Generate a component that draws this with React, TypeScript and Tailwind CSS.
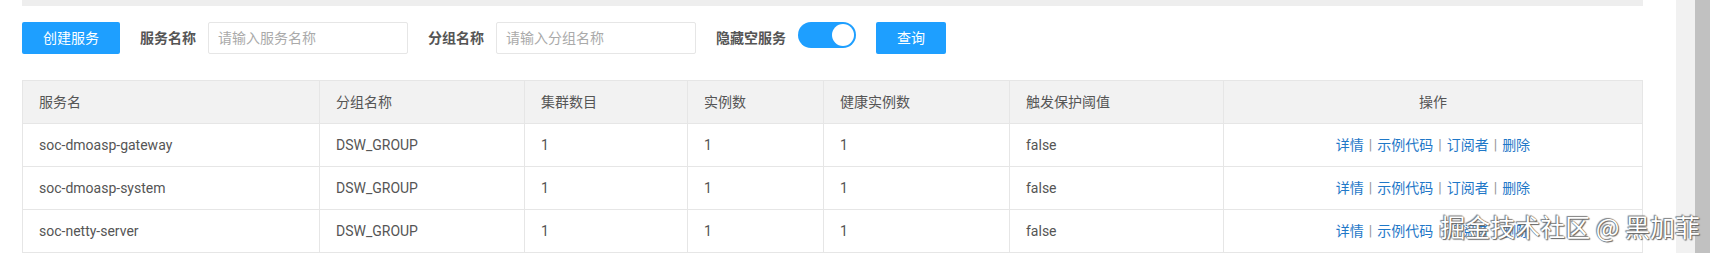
import React from "react";

const FONT = "font-['Roboto','Noto_Sans_CJK_SC',sans-serif]";

const cols = [
  { w: "w-[297px]", key: "name", title: "服务名" },
  { w: "w-[205px]", key: "group", title: "分组名称" },
  { w: "w-[163px]", key: "cluster", title: "集群数目" },
  { w: "w-[136px]", key: "inst", title: "实例数" },
  { w: "w-[186px]", key: "healthy", title: "健康实例数" },
  { w: "w-[214px]", key: "protect", title: "触发保护阈值" },
];

const rows = [
  { name: "soc-dmoasp-gateway", group: "DSW_GROUP", cluster: "1", inst: "1", healthy: "1", protect: "false" },
  { name: "soc-dmoasp-system", group: "DSW_GROUP", cluster: "1", inst: "1", healthy: "1", protect: "false" },
  { name: "soc-netty-server", group: "DSW_GROUP", cluster: "1", inst: "1", healthy: "1", protect: "false" },
];

function Sep() {
  return <span className="mx-[5px] text-[#999]">|</span>;
}

function Actions() {
  return (
    <span className="text-[#1f78c8]">
      <span>详情</span>
      <Sep />
      <span>示例代码</span>
      <Sep />
      <span>订阅者</span>
      <Sep />
      <span>删除</span>
    </span>
  );
}

export default function App() {
  return (
    <div className={`relative flex h-[253px] w-[1710px] overflow-hidden bg-white text-[14px] ${FONT}`}>
      <div className="flex w-[1676px] flex-col pl-[22px] pr-[33px]">
        <div className="h-[6px] bg-[#eeeeee]" />
        <div className="mt-[16px] flex h-[32px] items-center">
          <button className="h-[32px] w-[98px] rounded-[2px] bg-[#1E9FFF] text-[14px] text-white">创建服务</button>
          <span className="ml-[20px] w-[56px] font-bold text-[#555]">服务名称</span>
          <input
            className="ml-[12px] h-[32px] w-[200px] rounded-[2px] border border-[#e6e6e6] px-[9px] text-[14px] outline-none placeholder:text-[#aaa]"
            placeholder="请输入服务名称"
          />
          <span className="ml-[20px] w-[56px] font-bold text-[#555]">分组名称</span>
          <input
            className="ml-[12px] h-[32px] w-[200px] rounded-[2px] border border-[#e6e6e6] px-[9px] text-[14px] outline-none placeholder:text-[#aaa]"
            placeholder="请输入分组名称"
          />
          <span className="ml-[20px] w-[70px] font-bold text-[#555]">隐藏空服务</span>
          <div className="ml-[12px] flex h-[26px] w-[58px] items-center justify-end self-start rounded-full bg-[#1E9FFF] pr-[2px]">
            <div className="h-[22px] w-[22px] rounded-full bg-white" />
          </div>
          <button className="ml-[20px] h-[32px] w-[70px] rounded-[2px] bg-[#1E9FFF] text-[14px] text-white">查询</button>
        </div>
        <div className="mt-[26px] flex w-[1621px] flex-col border-l border-t border-[#e6e6e6] text-[#555]">
          <div className="flex h-[43px] border-b border-[#e6e6e6] bg-[#f2f2f2]">
            {cols.map((c) => (
              <div key={c.key} className={`${c.w} flex items-center border-r border-[#e6e6e6] px-[16px]`}>
                {c.title}
              </div>
            ))}
            <div className="flex w-[419px] items-center justify-center border-r border-[#e6e6e6]">操作</div>
          </div>
          {rows.map((r, i) => (
            <div key={i} className="flex h-[43px] border-b border-[#e6e6e6]">
              {cols.map((c) => (
                <div key={c.key} className={`${c.w} flex items-center border-r border-[#e6e6e6] px-[16px]`}>
                  {(r as Record<string, string>)[c.key]}
                </div>
              ))}
              <div className="flex w-[419px] items-center justify-center border-r border-[#e6e6e6]">
                <Actions />
              </div>
            </div>
          ))}
        </div>
      </div>
      <div className="w-[19px] bg-[#f1f1f1]" />
      <div className="w-[15px] bg-[#c1c1c1]" />
      <div className="absolute right-[10px] top-[214px] font-['Noto_Sans_CJK_SC',sans-serif] text-[25px] leading-none text-white [text-shadow:0_0_1px_#444,1px_1px_1px_#666,-1px_-1px_1px_#888]">
        掘金技术社区 @ 黑加菲
      </div>
    </div>
  );
}
